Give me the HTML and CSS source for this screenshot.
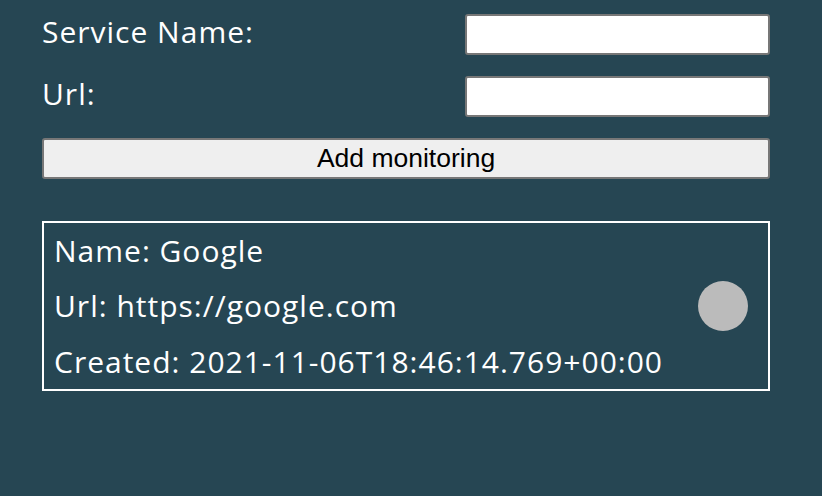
FILE: index.html
```html
<!DOCTYPE html>
<html>
<head>
<meta charset="utf-8">
<link rel="stylesheet" href="styles.css">
</head>
<body>
<div class="app">
  <form class="form">
    <div class="row">
      <label class="label">Service Name:</label>
      <input class="input" type="text">
    </div>
    <div class="row">
      <label class="label">Url:</label>
      <input class="input" type="text">
    </div>
    <button class="btn" type="button">Add monitoring</button>
  </form>
  <div class="card">
    <div class="info">
      <div class="line">Name: Google</div>
      <div class="line">Url: https://google.com</div>
      <div class="line">Created: 2021-11-06T18:46:14.769+00:00</div>
    </div>
    <div class="status"></div>
  </div>
</div>
</body>
</html>
```
FILE: styles.css
```css
html, body {
  margin: 0;
  padding: 0;
  background: #264653;
}
body {
  font-family: "Open Sans", "Noto Sans", sans-serif;
  color: #ffffff;
}
.app {
  width: 728px;
  margin-left: 42px;
  padding-top: 14px;
}
.form {
  display: flex;
  flex-direction: column;
  gap: 21px;
  margin: 0;
}
.row {
  display: flex;
  justify-content: space-between;
  align-items: center;
  height: 41px;
}
.label {
  font-size: 30px;
  margin-bottom: 6px;
  letter-spacing: 1px;
}
.input {
  box-sizing: border-box;
  width: 305px;
  height: 41px;
  margin: 0;
  background: #ffffff;
  border: 2px solid #777777;
  border-radius: 3px;
}
.btn {
  box-sizing: border-box;
  width: 728px;
  height: 41px;
  margin: 0;
  padding: 0;
  background: #efefef;
  border: 2px solid #777777;
  border-radius: 3px;
  font-family: "Liberation Sans", Arial, sans-serif;
  font-size: 26.5px;
  color: #000000;
}
.card {
  margin-top: 42px;
  box-sizing: border-box;
  height: 170px;
  border: 2px solid #ffffff;
  display: flex;
  justify-content: space-between;
  align-items: center;
  padding: 0 20px 0 10px;
}
.info {
  display: flex;
  flex-direction: column;
}
.line {
  font-size: 30px;
  line-height: 55.5px;
  letter-spacing: 1px;
}
.status {
  width: 50px;
  height: 50px;
  border-radius: 50%;
  background: #bbbbbb;
}
```
